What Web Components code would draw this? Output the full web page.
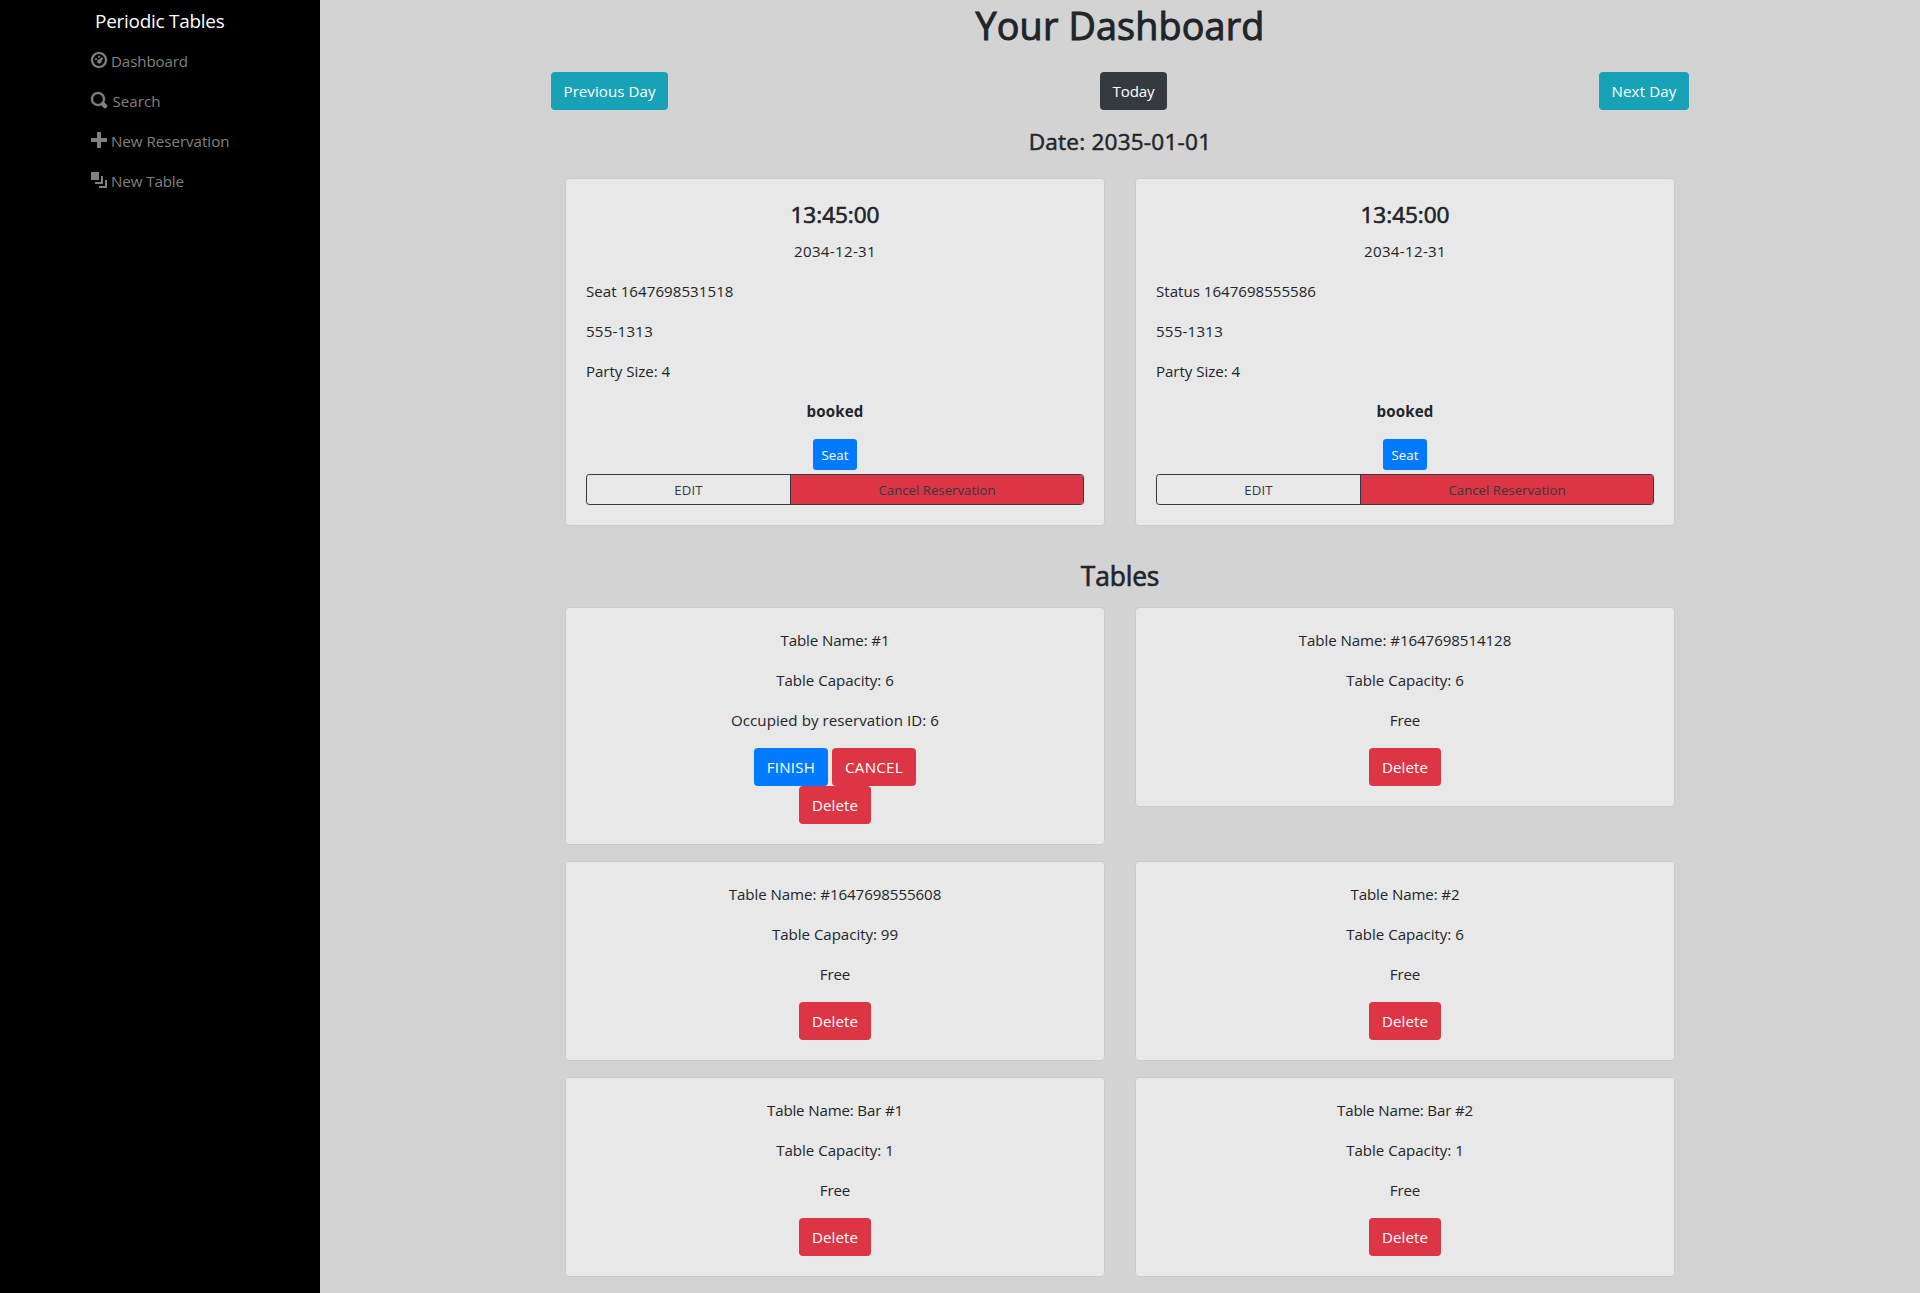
<!DOCTYPE html>
<html lang="en">
<head>
<meta charset="utf-8">
<title>Periodic Tables</title>
<style>
body{margin:0;background:#d3d3d3;color:#212529;font:15.1px/24px "Open Sans","Noto Sans",sans-serif}
</style>
</head>
<body>
<pt-app></pt-app>
<script>
const define = (name, html, init) => {
  const template = document.createElement('template');
  template.innerHTML = html;
  customElements.define(name, class extends HTMLElement {
    connectedCallback() {
      if (this.shadowRoot) return;
      this.attachShadow({mode: 'open'}).append(template.content.cloneNode(true));
      if (init) init(this, this.shadowRoot);
    }
  });
};

// Text tracked so that it occupies the advance width given in "w".
define('pt-text', `<style>:host{display:inline-block;white-space:nowrap;text-align:left}span{display:inline-block}</style><span><slot></slot></span>`,
  (el, root) => {
    const span = root.querySelector('span');
    const w = parseFloat(el.getAttribute('w'));
    if (!w) return;
    const natural = span.getBoundingClientRect().width;
    span.style.letterSpacing = ((w - natural) / el.textContent.length).toFixed(4) + 'px';
  });

define('pt-button', `<style>
:host{display:inline-block}
button{display:block;box-sizing:border-box;width:100%;height:38px;margin:0;padding:0 0 1px;border:0;border-radius:4px;font:inherit;line-height:24px;color:#fff;background:#dc3545;text-align:center}
:host([kind=info]) button{background:#17a2b8}
:host([kind=dark]) button{background:#343a40}
:host([kind=primary]) button{background:#007bff}
:host([small]) button{height:31px;padding:1px 0 0;font-size:13.2px;line-height:21px;border-radius:3.2px}
</style><button type="button"><slot></slot></button>`);

define('pt-icon', `<style>:host{display:block;width:16px;height:16px}svg{display:block;fill:currentColor}</style><svg width="16" height="16" viewBox="0 0 8 8"></svg>`,
  (el, root) => {
    const shapes = {
      dashboard: '<path d="M4 0c-2.2 0-4 1.8-4 4s1.8 4 4 4 4-1.8 4-4-1.8-4-4-4zm0 1c1.66 0 3 1.34 3 3s-1.34 3-3 3-3-1.34-3-3 1.34-3 3-3z"/><circle cx="4" cy="2.4" r=".5"/><circle cx="2.5" cy="3.5" r=".5"/><circle cx="4.1" cy="4.7" r="1"/><path d="M5.15 2.85a.5.5 0 0 1 .75.65l-1 1.5-1.1-.9z"/>',
      search: '<path d="M3.5 0c-1.93 0-3.5 1.57-3.5 3.5s1.57 3.5 3.5 3.5c.59 0 1.17-.14 1.66-.41a1 1 0 0 0 .13.13l1 1a1.02 1.02 0 1 0 1.44-1.44l-1-1a1 1 0 0 0-.16-.13c.27-.49.44-1.06.44-1.66 0-1.93-1.55-3.5-3.5-3.5zm0 1c1.39 0 2.5 1.11 2.5 2.5 0 .66-.24 1.27-.66 1.72l-.03.03a1 1 0 0 0-.13.13c-.44.4-1.04.63-1.69.63-1.39 0-2.5-1.11-2.5-2.5s1.11-2.5 2.5-2.5z"/>',
      plus: '<path d="M3 0v3h-3v2h3v3h2v-3h3v-2h-3v-3h-2z"/>',
      layers: '<path d="M0 0v4h4v-4h-4zm5 2v3h-3v1h4v-4h-1zm2 2v3h-3v1h4v-4h-1z"/>'
    };
    const svg = root.querySelector('svg');
    svg.innerHTML = shapes[el.getAttribute('name')];
    svg.style.stroke = 'currentColor';
    svg.style.strokeWidth = el.getAttribute('name') === 'search' ? '.2' : el.getAttribute('name') === 'dashboard' ? '.15' : '0';
    svg.style.overflow = 'visible';
  });

define('pt-nav-link', `<style>
:host{display:block}
a{display:flex;height:40px;box-sizing:border-box;padding:8px 0 0;gap:4px;color:#808080}
pt-icon{margin-top:3px}
</style><a><pt-icon></pt-icon><slot></slot></a>`,
  (el, root) => {
    const icon = document.createElement('pt-icon');
    icon.setAttribute('name', el.getAttribute('icon'));
    root.querySelector('pt-icon').replaceWith(icon);
  });

define('pt-sidebar', `<style>
:host{display:block;background:#000;box-sizing:border-box;padding:6px 0 0 91px}
.brand{height:35px;padding-left:4px;box-sizing:border-box;color:#fff;font-size:18.9px;line-height:30px}
.search{padding-left:1.5px}
</style>
<div class="brand"><pt-text w="129.5">Periodic Tables</pt-text></div>
<nav>
<pt-nav-link icon="dashboard"><pt-text w="77">Dashboard</pt-text></pt-nav-link>
<pt-nav-link icon="search"><pt-text class="search" w="48">Search</pt-text></pt-nav-link>
<pt-nav-link icon="plus"><pt-text w="118.5">New Reservation</pt-text></pt-nav-link>
<pt-nav-link icon="layers"><pt-text w="73">New Table</pt-text></pt-nav-link>
</nav>`);

define('pt-card', `<style>
:host{display:block;box-sizing:border-box;border:1px solid #cbcbcb;border-radius:4px;background:#e8e8e8;padding:20px}
</style><slot></slot>`);

define('pt-reservation', `<style>
:host{display:block}
h4{box-sizing:border-box;height:28px;margin:0 0 12px;padding-top:1px;font-size:22.6px;line-height:29px;font-weight:400;-webkit-text-stroke:.65px currentColor;text-align:center}
p{margin:0 0 16px;height:24px}
.c{text-align:center}
.b{font-weight:700}
.seat{display:flex;justify-content:center;margin-bottom:4px}
.seat pt-button{width:44px}
.group{display:flex;height:31px;box-sizing:border-box;border:1px solid #343a40;border-radius:3.2px;color:#343a40;font-size:13.2px;line-height:30px;text-align:center;overflow:hidden}
.edit{width:203px;border-right:1px solid #343a40}
.cancel{flex:1;background:#dc3545}
</style>
<pt-card>
<h4><pt-text w="89">13:45:00</pt-text></h4>
<p class="c"><pt-text w="82">2034-12-31</pt-text></p>
<p class="name"></p>
<p><pt-text w="67">555-1313</pt-text></p>
<p><pt-text w="84">Party Size: 4</pt-text></p>
<p class="c b"><pt-text w="57">booked</pt-text></p>
<div class="seat"><pt-button kind="primary" small><pt-text w="27">Seat</pt-text></pt-button></div>
<div class="group"><div class="edit"><pt-text w="28.5">EDIT</pt-text></div><div class="cancel"><pt-text w="117">Cancel Reservation</pt-text></div></div>
</pt-card>`,
  (el, root) => {
    root.querySelector('.name').innerHTML = `<pt-text w="${el.getAttribute('w')}">${el.getAttribute('name')}</pt-text>`;
  });

define('pt-table', `<style>
:host{display:block;text-align:center}
p{margin:0 0 16px;height:24px}
.row{display:flex;justify-content:center;gap:4px}
.finish{width:74px}.cancel{width:84px}.delete{width:72px}
</style>
<pt-card>
<p class="name"></p><p class="cap"></p><p class="status"></p>
<div class="row occupied"><pt-button class="finish" kind="primary"><pt-text w="48.5">FINISH</pt-text></pt-button><pt-button class="cancel"><pt-text w="58">CANCEL</pt-text></pt-button></div>
<div class="row"><pt-button class="delete"><pt-text w="46">Delete</pt-text></pt-button></div>
</pt-card>`,
  (el, root) => {
    const put = (sel, text, w) => { root.querySelector(sel).innerHTML = `<pt-text w="${w}">${text}</pt-text>`; };
    const a = n => el.getAttribute(n);
    put('.name', 'Table Name: ' + a('name'), a('w'));
    put('.cap', 'Table Capacity: ' + a('capacity'), a('capacity').length > 1 ? 126 : 117.5);
    if (a('reservation')) put('.status', 'Occupied by reservation ID: ' + a('reservation'), 208);
    else { put('.status', 'Free', 30.5); root.querySelector('.occupied').remove(); }
  });

define('pt-dashboard', `<style>
:host{display:block;width:1138px;margin:0 auto}
h1,h2,h3{box-sizing:border-box;margin:0;font-weight:400;text-align:center;-webkit-text-stroke:.5px currentColor}
h1{height:72px;font-size:37.7px;line-height:52px;-webkit-text-stroke-width:1px}
.days{display:flex;justify-content:space-between}
.prev{width:117px}.today{width:67px}.next{width:90px}
h3{margin-top:16px;height:52px;padding-top:1px;font-size:22.6px;line-height:29px}
.grid{display:grid;grid-template-columns:540px 540px;justify-content:center;column-gap:30px;row-gap:16px;align-items:start}
h2{margin-top:32px;height:49px;padding-top:1px;font-size:26.4px;line-height:34px;-webkit-text-stroke-width:.65px}
</style>
<h1><pt-text w="289">Your Dashboard</pt-text></h1>
<div class="days"><pt-button class="prev" kind="info"><pt-text w="92">Previous Day</pt-text></pt-button><pt-button class="today" kind="dark"><pt-text w="42">Today</pt-text></pt-button><pt-button class="next" kind="info"><pt-text w="65">Next Day</pt-text></pt-button></div>
<h3><pt-text w="182.5">Date: 2035-01-01</pt-text></h3>
<section class="grid">
<pt-reservation name="Seat 1647698531518" w="147.5"></pt-reservation>
<pt-reservation name="Status 1647698555586" w="160"></pt-reservation>
</section>
<h2><pt-text w="78.5">Tables</pt-text></h2>
<section class="grid">
<pt-table name="#1" w="109" capacity="6" reservation="6"></pt-table>
<pt-table name="#1647698514128" w="212.5" capacity="6"></pt-table>
<pt-table name="#1647698555608" w="212.5" capacity="99"></pt-table>
<pt-table name="#2" w="109" capacity="6"></pt-table>
<pt-table name="Bar #1" w="136" capacity="1"></pt-table>
<pt-table name="Bar #2" w="136" capacity="1"></pt-table>
</section>`);

define('pt-app', `<style>
:host{display:grid;grid-template-columns:320px 1fr;height:1293px;overflow:hidden}
</style><pt-sidebar></pt-sidebar><main><pt-dashboard></pt-dashboard></main>`);
</script>
</body>
</html>
